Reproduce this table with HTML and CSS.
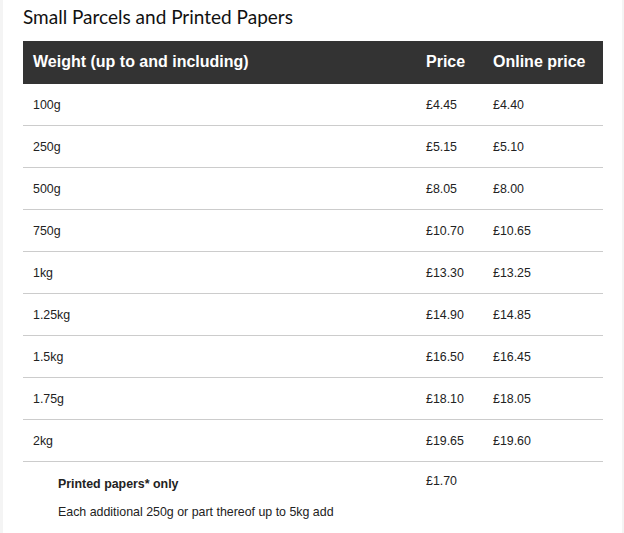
FILE: index.html
```html
<!DOCTYPE html>
<html lang="en">
<head>
<meta charset="utf-8">
<title>Small Parcels and Printed Papers</title>
<link rel="stylesheet" href="styles.css">
</head>
<body>
<div class="page">
  <h2 class="title">Small Parcels and Printed Papers</h2>
  <table class="prices">
    <colgroup>
      <col class="c-weight">
      <col class="c-price">
      <col class="c-online">
    </colgroup>
    <thead>
      <tr>
        <th>Weight (up to and including)</th>
        <th>Price</th>
        <th>Online price</th>
      </tr>
    </thead>
    <tbody>
      <tr><td>100g</td><td>£4.45</td><td>£4.40</td></tr>
      <tr><td>250g</td><td>£5.15</td><td>£5.10</td></tr>
      <tr><td>500g</td><td>£8.05</td><td>£8.00</td></tr>
      <tr><td>750g</td><td>£10.70</td><td>£10.65</td></tr>
      <tr><td>1kg</td><td>£13.30</td><td>£13.25</td></tr>
      <tr><td>1.25kg</td><td>£14.90</td><td>£14.85</td></tr>
      <tr><td>1.5kg</td><td>£16.50</td><td>£16.45</td></tr>
      <tr><td>1.75g</td><td>£18.10</td><td>£18.05</td></tr>
      <tr><td>2kg</td><td>£19.65</td><td>£19.60</td></tr>
      <tr class="extra">
        <td class="note">
          <div class="note-title">Printed papers* only</div>
          <div class="note-text">Each additional 250g or part thereof up to 5kg add</div>
        </td>
        <td class="extra-price">£1.70</td>
        <td></td>
      </tr>
    </tbody>
  </table>
</div>
</body>
</html>
```
FILE: styles.css
```css
html, body {
  margin: 0;
  padding: 0;
}
body {
  background: #f4f4f4;
  font-family: "Liberation Sans", Arial, sans-serif;
  color: #222;
}
.page {
  background: #fff;
  margin-left: 3px;
  width: 599px;
  min-height: 533px;
  padding: 0 0 0 20px;
}
.title {
  margin: 0 0 12px;
  padding-top: 5px;
  font-family: Lato, "Open Sans", sans-serif;
  font-weight: 400;
  font-size: 19px;
  line-height: 24px;
  color: #111;
}
.prices {
  border-collapse: collapse;
  table-layout: fixed;
  width: 580px;
}
.c-weight { width: 393px; }
.c-price { width: 67px; }
.c-online { width: 120px; }
.prices thead th {
  background: #333;
  color: #fff;
  font-size: 16px;
  font-weight: 700;
  text-align: left;
  height: 41px;
  padding: 0 10px 2px;
  vertical-align: middle;
}
.prices tbody td {
  font-size: 12.4px;
  height: 41px;
  padding: 0 10px;
  border-bottom: 1px solid #ccc;
  vertical-align: middle;
}
.prices tbody tr.extra td {
  border-bottom: none;
  vertical-align: top;
  padding-top: 12px;
}
.prices tbody td.note {
  padding-left: 35px;
}
.note-title {
  font-weight: 700;
  line-height: 20px;
}
.note-text {
  margin-top: 8px;
  line-height: 20px;
}
.extra-price {
  line-height: 14px;
}
```
